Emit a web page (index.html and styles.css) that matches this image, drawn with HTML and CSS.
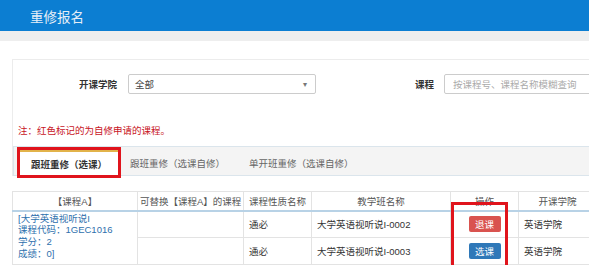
FILE: index.html
```html
<!DOCTYPE html>
<html lang="zh-CN">
<head>
    <meta charset="UTF-8">
    <meta name="viewport" content="width=device-width, initial-scale=1.0">
    <title>重修报名</title>
    <link rel="stylesheet" href="styles.css">
</head>
<body>
    <header class="page-header">
        <h1 class="page-title">重修报名</h1>
    </header>
    <div class="header-band"></div>

    <div class="container">
        <div class="panel">
            <div class="filter-row">
                <div class="field">
                    <label class="field-label label-college">开课学院</label>
                    <div class="select-box">
                        <span>全部</span>
                        <span class="caret">▾</span>
                    </div>
                </div>
                <div class="field">
                    <label class="field-label label-course">课程</label>
                    <input class="text-input" type="text" placeholder="按课程号、课程名称模糊查询">
                </div>
            </div>

            <p class="note">注：红色标记的为自修申请的课程。</p>

            <ul class="tabs">
                <li class="tab active">跟班重修（选课）</li>
                <li class="tab">跟班重修（选课自修）</li>
                <li class="tab">单开班重修（选课自修）</li>
            </ul>
        </div>

        <div class="table-wrap">
            <table>
                <thead>
                    <tr>
                        <th class="col-a">【课程A】</th>
                        <th class="col-b">可替换【课程A】的课程</th>
                        <th class="col-c">课程性质名称</th>
                        <th class="col-d">教学班名称</th>
                        <th class="col-e">操作</th>
                        <th class="col-f">开课学院</th>
                    </tr>
                </thead>
                <tbody>
                    <tr>
                        <td class="course-info" rowspan="2">
                            [大学英语视听说I<br>
                            课程代码：1GEC1016<br>
                            学分：2<br>
                            成绩：0]
                        </td>
                        <td></td>
                        <td>通必</td>
                        <td>大学英语视听说I-0002</td>
                        <td class="op"><button class="btn btn-drop">退课</button></td>
                        <td>英语学院</td>
                    </tr>
                    <tr>
                        <td></td>
                        <td>通必</td>
                        <td>大学英语视听说I-0003</td>
                        <td class="op"><button class="btn btn-pick">选课</button></td>
                        <td>英语学院</td>
                    </tr>
                </tbody>
            </table>
            <!-- 标注框 -->
            <div class="mark-box"></div>
        </div>
    </div>
</body>
</html>
```

FILE: styles.css
```css
* {
    box-sizing: border-box;
    margin: 0;
    padding: 0;
    font-family: 'Liberation Sans', 'Noto Sans CJK SC', sans-serif;
}

html, body {
    overflow: hidden;
}

body {
    background-color: #fff;
    color: #333;
    font-size: 9.5px;
    width: 720px;
}

.page-header {
    background-color: #0c7ed2;
    height: 31px;
    padding-left: 30px;
    display: flex;
    align-items: center;
}

.page-title {
    font-size: 13.5px;
    font-weight: normal;
    color: #e6eef7;
}

.header-band {
    height: 10px;
    background-color: #eeeeee;
}

.container {
    padding: 18px 0 0 12px;
}

.panel {
    border: 1px solid #ececec;
    border-right: none;
    border-bottom: none;
}

.filter-row {
    display: flex;
    align-items: center;
    padding-top: 14px;
}

.field {
    display: flex;
    align-items: center;
}

.field-label {
    font-weight: bold;
    text-align: right;
    color: #333;
}

.label-college {
    width: 104px;
    margin-right: 11px;
}

.label-course {
    width: 118px;
    margin-right: 10px;
}

.select-box {
    width: 188px;
    height: 20px;
    border: 1px solid #ccc;
    border-radius: 2px;
    display: flex;
    align-items: center;
    justify-content: space-between;
    padding: 0 6px;
    color: #444;
}

.caret {
    font-size: 8px;
    color: #777;
    margin-right: 2px;
}

.text-input {
    width: 170px;
    height: 20px;
    border: 1px solid #ccc;
    border-radius: 2px;
    padding: 0 8px;
    font-size: 9.5px;
}

.text-input::placeholder {
    color: #aaa;
}

.note {
    color: #c8141e;
    line-height: 14px;
    margin-top: 30px;
    padding-left: 5px;
}

.tabs {
    list-style: none;
    display: flex;
    margin-top: 8px;
    height: 30px;
    background-color: #f4f4f4;
    border: 1px solid #dbe5ec;
    border-right: none;
    padding: 3px 0 0 6px;
}

.tab {
    padding: 0 12px;
    color: #666;
    display: flex;
    align-items: center;
    height: 25px;
    white-space: nowrap;
}

.tab.active {
    background-color: #fff;
    border-top: 2px solid #e2b34a;
    color: #333;
    font-weight: bold;
    padding: 0 11px;
    width: 98px;
    outline: 3px solid #e0141c;
}

.table-wrap {
    position: relative;
    margin-top: 15px;
}

table {
    border-collapse: collapse;
    width: 584px;
    table-layout: fixed;
}

th, td {
    border: 1px solid #e3e3e3;
    padding: 0 5px;
    text-align: left;
    font-weight: normal;
    white-space: nowrap;
}

th {
    height: 19px;
    padding: 0 2px;
    text-align: center;
    color: #555;
    border-bottom: 2px solid #b8d2e6;
}

td {
    height: 27px;
    color: #333;
}

.col-a { width: 125px; }
.col-b { width: 106px; }
.col-c { width: 68px; }
.col-d { width: 139px; }
.col-e { width: 68px; }
.col-f { width: 78px; }

.course-info {
    vertical-align: top;
    color: #2e70ad;
    line-height: 11.7px;
    padding-top: 1px;
}

.op {
    text-align: center;
}

.btn {
    width: 32px;
    height: 16px;
    border: none;
    border-radius: 2px;
    color: #fff;
    font-size: 9.5px;
    vertical-align: middle;
}

.btn-drop {
    background-color: #d9534f;
}

.btn-pick {
    background-color: #2f78b8;
}

.mark-box {
    position: absolute;
    left: 439px;
    top: 11px;
    width: 57px;
    height: 70px;
    border: 3px solid #e0141c;
}
```
